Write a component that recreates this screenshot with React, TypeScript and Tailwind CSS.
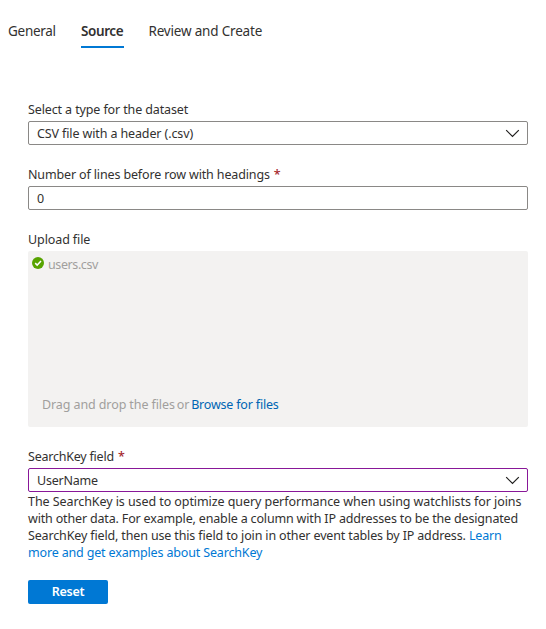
import type { ReactNode } from "react";

function Chevron() {
  return (
    <svg className="h-[9px] w-[15px]" viewBox="0 0 15 9" fill="none">
      <path d="M1.2 1.2L7.5 7.5L13.8 1.2" stroke="#201f1e" strokeWidth="1.2" />
    </svg>
  );
}

function Label({ children, required = false }: { children: ReactNode; required?: boolean }) {
  return (
    <div className="flex h-[18px] items-center gap-1 pt-[2px] leading-[18px]">
      <span>{children}</span>
      {required && <span className="font-medium text-[#a4262c]">*</span>}
    </div>
  );
}

function Field({ value, className, select = false }: { value: string; className: string; select?: boolean }) {
  return (
    <div className={`flex h-6 items-center justify-between rounded-[2px] border pr-[7px] pl-2 ${className}`}>
      <span className="pt-[2px]">{value}</span>
      {select && <Chevron />}
    </div>
  );
}

export default function App() {
  return (
    <main className="h-[629px] w-[546px] overflow-hidden bg-white font-['Noto_Sans','Open_Sans',sans-serif] text-[12.5px] text-[#323130]">
      <nav className="flex h-12 pt-[22px] pl-2 text-[13.5px] leading-[18px]">
        <div className="w-[73px] whitespace-nowrap tracking-[-0.28px]">General</div>
        <div className="mr-[24.5px] w-[43px] whitespace-nowrap border-b-2 border-[#0078d4] font-semibold tracking-[-0.4px]">Source</div>
        <div className="whitespace-nowrap tracking-[-0.19px]">Review and Create</div>
      </nav>

      <form className="ml-7 w-[500px] pt-[52px]">
        <div className="tracking-[-0.12px]">
          <Label>Select a type for the dataset</Label>
          <Field className="mt-[3px] border-[#8a8886]" value="CSV file with a header (.csv)" select />
        </div>

        <div className="mt-5 tracking-[-0.14px]">
          <Label required>Number of lines before row with headings</Label>
          <Field className="mt-[3px] border-[#8a8886]" value="0" />
        </div>

        <div className="mt-5">
          <div className="tracking-[-0.1px]">
            <Label>Upload file</Label>
          </div>
          <div className="mt-[3px] flex h-44 flex-col justify-between rounded-[2px] bg-[#f3f2f1] text-[#a19f9d]">
            <div className="flex items-center gap-1 pt-[5px] pl-1 leading-[18px]">
              <svg className="mb-[5px] h-3 w-3" viewBox="0 0 12 12" fill="none">
                <circle cx="6" cy="6" r="6" fill="#57a300" />
                <path d="M3.2 6.1L5.2 8.1L9 4.1" stroke="white" strokeWidth="1.5" />
              </svg>
              <span className="tracking-[-0.4px]">users.csv</span>
            </div>
            <div className="flex gap-[2px] pb-[13px] pl-[14px] leading-[18px]">
              <span className="tracking-[-0.1px]">Drag and drop the files</span>
              <span className="tracking-[-0.2px]">or</span>
              <a className="tracking-[-0.19px] text-[#0065b3]">Browse for files</a>
            </div>
          </div>
        </div>

        <div className="mt-5 tracking-[-0.22px]">
          <Label required>SearchKey field</Label>
          <Field className="mt-[3px] border-[#881798]" value="UserName" select />
        </div>

        <p className="whitespace-nowrap pt-px leading-[17px]">
          <span className="block tracking-[-0.075px]">The SearchKey is used to optimize query performance when using watchlists for joins</span>
          <span className="block tracking-[-0.165px]">with other data. For example, enable a column with IP addresses to be the designated</span>
          <span className="block tracking-[-0.145px]">SearchKey field, then use this field to join in other event tables by IP address. <a className="text-[#0078d4]">Learn</a></span>
          <a className="block tracking-[-0.16px] text-[#0078d4]">more and get examples about SearchKey</a>
        </p>

        <button type="button" className="mt-[19px] block h-6 w-20 rounded-[2px] bg-[#0078d4] font-semibold tracking-[-0.3px] text-white">Reset</button>
      </form>
    </main>
  );
}
